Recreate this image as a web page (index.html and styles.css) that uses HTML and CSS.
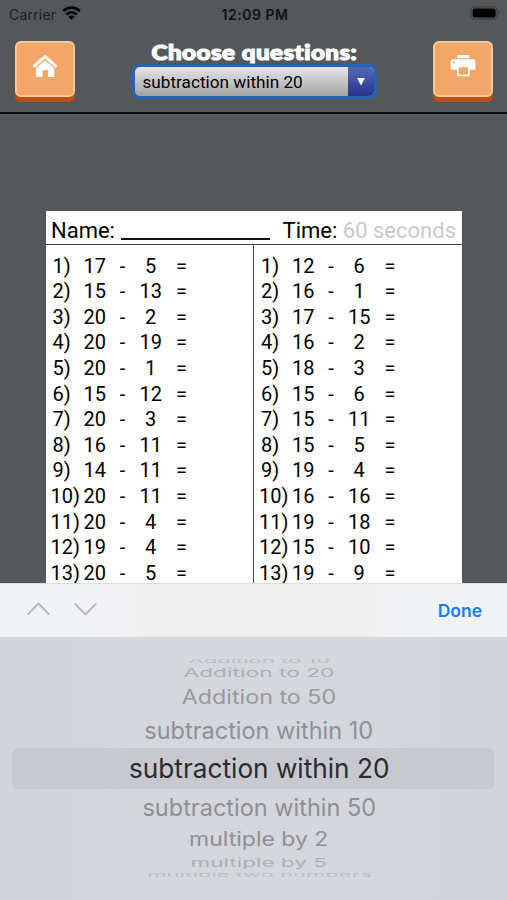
FILE: index.html
```html
<!DOCTYPE html>
<html lang="en">

<head>
    <meta charset="UTF-8">
    <meta name="viewport" content="width=device-width, initial-scale=1.0">
    <title>Math Worksheets</title>
    <link rel="stylesheet" href="styles.css">
</head>

<body>

    <!-- Status bar -->
    <div class="status-bar">
        <div class="carrier">
            <span>Carrier</span>
            <svg width="19" height="14" viewBox="0 0 19 14" fill="none" stroke="#000" stroke-width="2.8">
                <path d="M1.2 5.1a11.8 11.8 0 0 1 16.6 0" />
                <path d="M4.2 8.6a7.5 7.5 0 0 1 10.6 0" />
                <path d="M9.5 13.7L6.4 10.7a4.3 4.3 0 0 1 6.2 0z" fill="#000" stroke="none" />
            </svg>
        </div>
        <div class="clock">12:09 PM</div>
        <div class="battery">
            <svg width="31" height="14" viewBox="0 0 31 14">
                <rect x="0.8" y="0.8" width="26.5" height="12.4" rx="3.8" fill="none" stroke="#3b3f41" stroke-width="1.2" />
                <rect x="2.6" y="2.4" width="23" height="9.2" rx="2.2" />
                <path d="M28.6 4.8q2 2.2 0 4.4z" fill="#3b3f41" />
            </svg>
        </div>
    </div>

    <header>
        <button class="btn" aria-label="Home">
            <svg width="26" height="24" viewBox="0 0 26 24" fill="#fff">
                <path d="M0.5 11.6L13 0.5l12.5 11.1-1.9 2.3L13 4.6 2.4 13.9z" />
                <path d="M13 6.3l9.3 8V23h-6.3v-6.8h-5.4V23H3.9v-8.8z" />
            </svg>
        </button>
        <div class="chooser">
            <h1>Choose questions:</h1>
            <div class="select">
                <span class="select-text">subtraction within 20</span>
                <span class="select-arrow">
                    <svg width="8" height="8" viewBox="0 0 8 8"><path d="M0 0h8L4 7.6z" fill="#fff" /></svg>
                </span>
            </div>
        </div>
        <button class="btn" aria-label="Print">
            <svg width="26" height="24" viewBox="0 0 26 24">
                <rect x="7" y="1" width="12.5" height="3.2" rx="1" fill="#fff" />
                <path d="M3 5.3h20a2.4 2.4 0 0 1 2.4 2.4v8.1h-5.7v6.5H7v-6.5H.6V7.7A2.4 2.4 0 0 1 3 5.3z" fill="#fff" />
                <rect x="8.7" y="13.3" width="9.3" height="7.3" fill="#f2a667" />
                <circle cx="3.9" cy="8.4" r="1.1" fill="#f2a667" />
            </svg>
        </button>
    </header>

    <!-- Worksheet -->
    <main>
        <div class="sheet">
            <div class="sheet-head">
                <span class="name">Name:</span>
                <span class="name-line"></span>
                <span class="time">Time: <span class="seconds">60 seconds</span></span>
            </div>
            <div class="columns">
                <ol class="problems">
                    <li><span>1)</span><span>17</span><span>-</span><span>5</span><span>=</span></li>
                    <li><span>2)</span><span>15</span><span>-</span><span>13</span><span>=</span></li>
                    <li><span>3)</span><span>20</span><span>-</span><span>2</span><span>=</span></li>
                    <li><span>4)</span><span>20</span><span>-</span><span>19</span><span>=</span></li>
                    <li><span>5)</span><span>20</span><span>-</span><span>1</span><span>=</span></li>
                    <li><span>6)</span><span>15</span><span>-</span><span>12</span><span>=</span></li>
                    <li><span>7)</span><span>20</span><span>-</span><span>3</span><span>=</span></li>
                    <li><span>8)</span><span>16</span><span>-</span><span>11</span><span>=</span></li>
                    <li><span>9)</span><span>14</span><span>-</span><span>11</span><span>=</span></li>
                    <li class="wide"><span>10)</span><span>20</span><span>-</span><span>11</span><span>=</span></li>
                    <li class="wide"><span>11)</span><span>20</span><span>-</span><span>4</span><span>=</span></li>
                    <li class="wide"><span>12)</span><span>19</span><span>-</span><span>4</span><span>=</span></li>
                    <li class="wide"><span>13)</span><span>20</span><span>-</span><span>5</span><span>=</span></li>
                </ol>
                <ol class="problems">
                    <li><span>1)</span><span>12</span><span>-</span><span>6</span><span>=</span></li>
                    <li><span>2)</span><span>16</span><span>-</span><span>1</span><span>=</span></li>
                    <li><span>3)</span><span>17</span><span>-</span><span>15</span><span>=</span></li>
                    <li><span>4)</span><span>16</span><span>-</span><span>2</span><span>=</span></li>
                    <li><span>5)</span><span>18</span><span>-</span><span>3</span><span>=</span></li>
                    <li><span>6)</span><span>15</span><span>-</span><span>6</span><span>=</span></li>
                    <li><span>7)</span><span>15</span><span>-</span><span>11</span><span>=</span></li>
                    <li><span>8)</span><span>15</span><span>-</span><span>5</span><span>=</span></li>
                    <li><span>9)</span><span>19</span><span>-</span><span>4</span><span>=</span></li>
                    <li class="wide"><span>10)</span><span>16</span><span>-</span><span>16</span><span>=</span></li>
                    <li class="wide"><span>11)</span><span>19</span><span>-</span><span>18</span><span>=</span></li>
                    <li class="wide"><span>12)</span><span>15</span><span>-</span><span>10</span><span>=</span></li>
                    <li class="wide"><span>13)</span><span>19</span><span>-</span><span>9</span><span>=</span></li>
                </ol>
            </div>
        </div>
    </main>

    <!-- Picker -->
    <div class="toolbar">
        <svg width="70" height="14" viewBox="0 0 70 14" fill="none" stroke="#b4b5b8" stroke-width="1.9">
            <path d="M0.7 12.6L11.5 1.6l10.8 11" />
            <path d="M47.7 1.4l10.8 11 10.8-11" />
        </svg>
        <span class="done">Done</span>
    </div>
    <div class="picker">
        <div class="item up4"><span>Addition to 10</span></div>
        <div class="item up3"><span>Addition to 20</span></div>
        <div class="item up2"><span>Addition to 50</span></div>
        <div class="item up1"><span>subtraction within 10</span></div>
        <div class="item selected"><span>subtraction within 20</span></div>
        <div class="item down1"><span>subtraction within 50</span></div>
        <div class="item down2"><span>multiple by 2</span></div>
        <div class="item down3"><span>multiple by 5</span></div>
        <div class="item down4"><span>multiple two numbers</span></div>
    </div>

</body>

</html>
```

FILE: styles.css
```css
* {
    box-sizing: border-box;
}

body {
    margin: 0;
    height: 900px;
    overflow: hidden;
    display: flex;
    flex-direction: column;
    background-color: #54585b;
    color: #000;
    font-family: Roboto, sans-serif;
}

/* Status bar */
.status-bar {
    display: grid;
    grid-template-columns: 1fr auto 1fr;
    align-items: center;
    height: 28px;
    padding: 0 6px 0 9px;
    font-family: Inter, sans-serif;
    font-size: 14px;
    flex-shrink: 0;
}

.carrier {
    display: flex;
    align-items: center;
    gap: 6px;
    color: #1d1f20;
    letter-spacing: 0.2px;
}

.carrier svg {
    margin-top: -3px;
}

.clock {
    font-weight: 600;
    font-size: 14px;
    letter-spacing: 0.5px;
    color: #111;
}

.battery {
    display: flex;
    justify-content: flex-end;
    margin-top: -2px;
}

/* Header */
header {
    display: flex;
    justify-content: space-between;
    height: 86px;
    padding: 13px 14px 0 15px;
    border-bottom: 2px solid #0b0c0c;
    flex-shrink: 0;
}

.btn {
    display: flex;
    justify-content: center;
    width: 60px;
    height: 56px;
    padding: 11px 0 0;
    border: 2px solid #fbcb9d;
    border-radius: 6px;
    background-color: #f2a667;
    box-shadow: 0 5px 0 #b9520e;
}

.chooser {
    width: 246px;
    display: flex;
    flex-direction: column;
    align-items: center;
}

h1 {
    margin: -2px 0 0;
    font-family: Lato, sans-serif;
    font-weight: 900;
    font-size: 21px;
    line-height: 25px;
    letter-spacing: 0.4px;
    color: #fff;
    white-space: nowrap;
    -webkit-text-stroke: 1.2px #fff;
    transform: scaleX(1.15);
}

.select {
    display: flex;
    width: 245px;
    height: 35px;
    border: 3px solid #2364b5;
    border-radius: 8px;
    background: linear-gradient(#e6e6e6, #a3a3a3);
    overflow: hidden;
}

.select-text {
    flex: 1;
    padding-left: 8px;
    font-size: 17.2px;
    line-height: 30px;
    white-space: nowrap;
}

.select-arrow {
    display: flex;
    align-items: center;
    justify-content: center;
    width: 26px;
    background: linear-gradient(#5469b6, #26358c);
}

/* Worksheet */
main {
    flex: 1;
    min-height: 0;
    padding: 97px 45px 0 46px;
    overflow: hidden;
}

.sheet {
    height: 500px;
    background-color: #fff;
}

.sheet-head {
    display: flex;
    height: 34px;
    padding: 0 6px 0 5px;
    border-bottom: 1px solid #444;
    font-size: 22px;
    line-height: 40px;
    white-space: nowrap;
}

.name-line {
    width: 149px;
    height: 29px;
    margin: 0 13px 0 6px;
    border-bottom: 2px solid #111;
}

.seconds {
    color: #c9c9c9;
}

.columns {
    display: grid;
    grid-template-columns: 208px 1fr;
    height: 466px;
}

.problems {
    margin: 0;
    padding: 8.6px 0 0 6.5px;
    list-style: none;
    font-size: 20px;
    line-height: 25.6px;
}

.problems:first-child {
    border-right: 1px solid #444;
}

.problems:last-child {
    padding-left: 7px;
}

.problems li {
    display: grid;
    grid-template-columns: 31px 22px 34px 22px 40px;
    height: 25.6px;
    text-align: center;
}

.problems li span:first-child {
    text-align: left;
}

.problems .wide span:first-child {
    margin-left: -2px;
}

/* Picker */
.toolbar {
    display: flex;
    align-items: center;
    justify-content: space-between;
    height: 54px;
    padding: 0 25px 0 27px;
    background: linear-gradient(90deg, #f1f4f7, #efeff0 30%, #efeff0 70%, #f1f4f7);
    border-top: 1px solid #dcdddf;
    flex-shrink: 0;
}

.toolbar svg {
    margin-top: -3px;
}

.done {
    font-family: Inter, sans-serif;
    font-weight: 600;
    font-size: 17.5px;
    color: #147efb;
}

.picker {
    height: 263px;
    padding: 22px 12px 0;
    background: linear-gradient(90deg, #d0d5db, #d5d7dd 30%, #d5d7dd 70%, #d0d5db);
    font-family: Inter, sans-serif;
    font-size: 25px;
    color: #8d9096;
    flex-shrink: 0;
}

.item {
    display: flex;
    align-items: center;
    justify-content: center;
    padding-left: 11px;
    white-space: nowrap;
}

.item span {
    display: block;
    line-height: 30px;
}

.up4 {
    height: 4px;
    overflow: hidden;
    color: #bcbec4;
}

.up4 span {
    transform: scale(0.88, 0.22);
}

.up3 {
    height: 20px;
    color: #acafb4;
}

.up3 span {
    transform: scale(0.91, 0.46);
}

.up2 {
    height: 28px;
    color: #96999e;
}

.up2 span {
    transform: scale(0.93, 0.78);
}

.up1 {
    height: 37px;
}

.up1 span {
    transform: scale(0.94, 0.96);
}

.selected {
    height: 41px;
    border-radius: 7px;
    background-color: #c8c9d0;
    color: #2a2b2e;
    font-size: 27px;
}

.selected span {
    transform: scaleX(0.97);
}

.down1 {
    height: 36px;
}

.down1 span {
    transform: scale(0.94, 0.96);
}

.down2 {
    height: 28px;
}

.down2 span {
    transform: scale(0.92, 0.78);
}

.down3 {
    height: 20px;
    color: #acafb4;
}

.down3 span {
    transform: scale(0.9, 0.46);
}

.down4 {
    height: 4px;
    overflow: hidden;
    color: #bcbec4;
}

.down4 span {
    transform: scale(0.88, 0.22);
}
```
